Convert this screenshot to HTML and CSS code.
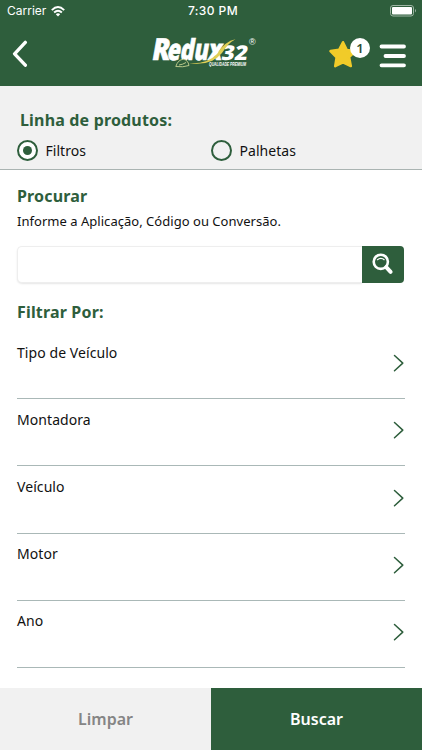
FILE: index.html
```html
<!DOCTYPE html>
<html lang="pt-BR">
<head>
<meta charset="utf-8">
<title>Redux32</title>
<link rel="stylesheet" href="styles.css">
</head>
<body>
<div class="app">
  <header class="header">
    <div class="status">
      <div class="carrier"><span>Carrier</span>
        <svg width="14" height="11" viewBox="0 0 14 11" fill="none" stroke="#fff" stroke-width="1.9"><path d="M.8 4.1Q7-1.9 13.2 4.1M3.1 6.5Q7 2.9 10.9 6.5"/><path d="M4.8 8.2Q7 6.4 9.2 8.2L7 10.5Z" fill="#fff" stroke="none"/></svg>
      </div>
      <span class="time">7:30 PM</span>
      <svg class="battery" width="27" height="12" viewBox="0 0 27 12"><rect x=".5" y=".5" width="23" height="10.5" rx="2.5" fill="none" stroke="#9db5a3"/><rect x="2" y="2" width="20" height="7.5" rx="1" fill="#fff"/><path d="M25 4Q27 5.7 25 7.5Z" fill="#9db5a3"/></svg>
    </div>
    <div class="navbar">
      <svg class="back" width="16" height="28" viewBox="0 0 16 28"><path d="M13.3 2.4 2.6 13.8 13.3 25.2" fill="none" stroke="#fff" stroke-width="3.4" stroke-linecap="round" stroke-linejoin="round"/></svg>
      <svg class="logo" width="106" height="38" viewBox="0 0 106 38">
        <g class="logo-text">
          <text class="word" x="0" y="25.3" font-size="30.5" textLength="17.5" lengthAdjust="spacingAndGlyphs" transform="translate(4.4 0) skewX(-10)">R</text>
          <text class="word" x="15.5" y="25.3" font-size="29" textLength="54.5" lengthAdjust="spacingAndGlyphs" transform="translate(4.4 0) skewX(-10)">edux</text>
          <text x="70" y="25.5" font-size="20.5" textLength="26" lengthAdjust="spacingAndGlyphs" transform="translate(4.2 0) skewX(-10)">32</text>
          <text class="tagline" x="58" y="31" font-size="5.2" textLength="37" lengthAdjust="spacingAndGlyphs">QUALIDADE PREMIUM</text>
          <text class="mark" x="98" y="10" font-size="9">®</text>
        </g>
        <path d="M38 28.2Q56 29.5 66 19 74 6 84.5 4.2 77 8 71 18 60 31.5 38 28.2Z" fill="#e0cf55"/>
        <path d="M24.8 31.5Q27 24.5 32.5 24.3 37 25 38 30.5 32 32.5 24.8 31.5ZM28 30Q32 29.5 35 27.5" fill="#2e5e3c" stroke="#b9c88a" stroke-width="1"/>
      </svg>
      <svg class="star" width="28" height="29" viewBox="0 0 28 29"><path d="M14 2.2 17.7 9.9 26.3 11.1 20.1 17.1 21.8 26.1 14 22.4 6.2 26.1 7.6 17.5 1.5 11.1 10.1 9.8Z" fill="#f1cb29" stroke="#f1cb29" stroke-width="2.5" stroke-linejoin="round"/></svg>
      <span class="badge">1</span>
      <svg class="menu" width="28" height="24" viewBox="0 0 28 24"><path d="M2.5 2.5H25M6.5 12H25M2.5 21.3H25" stroke="#fff" stroke-width="3.8" stroke-linecap="round"/></svg>
    </div>
  </header>

  <section class="products">
    <h2>Linha de produtos:</h2>
    <div class="radios">
      <div class="option"><span class="radio checked"></span><span>Filtros</span></div>
      <div class="option"><span class="radio"></span><span>Palhetas</span></div>
    </div>
  </section>

  <main class="content">
    <h2>Procurar</h2>
    <p>Informe a Aplicação, Código ou Conversão.</p>
    <div class="search">
      <input type="text" aria-label="Procurar">
      <button aria-label="Buscar"><svg width="22" height="22" viewBox="0 0 22 22" fill="none" stroke="#fff"><circle cx="8.8" cy="8.8" r="7.1" stroke-width="2.6"/><path d="M5.1 7Q9 3.7 12.5 7" stroke-width="1.2"/><path d="m14.2 14.2 4.4 4.6" stroke-width="4" stroke-linecap="round"/></svg></button>
    </div>
    <h2 class="filter-title">Filtrar Por:</h2>
    <div class="list">
      <div class="row"><span>Tipo de Veículo</span><svg width="12" height="18" viewBox="0 0 12 18"><path d="m1.5 1.5 8.3 7.6-8.3 7.6"/></svg></div>
      <div class="row"><span>Montadora</span><svg width="12" height="18" viewBox="0 0 12 18"><path d="m1.5 1.5 8.3 7.6-8.3 7.6"/></svg></div>
      <div class="row"><span>Veículo</span><svg width="12" height="18" viewBox="0 0 12 18"><path d="m1.5 1.5 8.3 7.6-8.3 7.6"/></svg></div>
      <div class="row"><span>Motor</span><svg width="12" height="18" viewBox="0 0 12 18"><path d="m1.5 1.5 8.3 7.6-8.3 7.6"/></svg></div>
      <div class="row"><span>Ano</span><svg width="12" height="18" viewBox="0 0 12 18"><path d="m1.5 1.5 8.3 7.6-8.3 7.6"/></svg></div>
    </div>
  </main>

  <footer class="actions">
    <button class="clear">Limpar</button>
    <button class="submit">Buscar</button>
  </footer>
</div>
</body>
</html>
```
FILE: styles.css
```css
* { box-sizing: border-box; }
body { margin: 0; font-family: "Noto Sans", sans-serif; color: #111; background: #fff; }
.app { width: 422px; height: 750px; display: flex; flex-direction: column; overflow: hidden; }
.header { height: 86px; flex: none; background: #2e5e3c; color: #fff; }
.status { height: 22px; display: grid; grid-template-columns: 1fr auto 1fr; align-items: center; padding: 0 5px 0 7px; font: 12px/22px Inter, sans-serif; }
.carrier { display: flex; align-items: center; gap: 5px; letter-spacing: 0; }
.time { font-weight: 500; font-size: 12px; letter-spacing: .4px; padding-left: 2px; }
.battery { justify-self: end; }
.navbar { height: 64px; display: flex; align-items: flex-start; padding-left: 12px; }
.back { margin-top: 18px; }
.logo { margin: 13px 0 0 123px; overflow: visible; }
.logo-text { fill: #fff; font-family: "Open Sans", sans-serif; font-weight: 800; }
.logo-text .word { stroke: #fff; stroke-width: .7; }
.logo-text .tagline { font-family: "Liberation Sans", sans-serif; font-style: italic; font-weight: 700; }
.logo-text .mark { font-family: "Liberation Sans", sans-serif; font-weight: 400; }
.star { margin: 18px 0 0 72px; }
.badge { position: relative; margin: 16px 0 0 -7px; width: 20px; height: 20px; border-radius: 50%; background: #fff; color: #2e4e36; font-size: 13px; font-weight: 600; line-height: 20px; text-align: center; }
.menu { margin: 22px 0 0 9px; }
h2 { margin: 0; font-size: 16px; line-height: 22px; font-weight: 700; letter-spacing: .17px; color: #2e5e3c; }
.products { height: 84px; flex: none; background: #f1f1f1; border-bottom: 1px solid #aab4b2; padding-top: 23px; }
.products h2 { padding-left: 20px; }
.radios { display: grid; grid-template-columns: 194px 1fr; padding: 8.5px 0 0 17px; }
.option { display: flex; align-items: center; gap: 7.5px; height: 22px; font-size: 14px; letter-spacing: .04px; }
.radio { width: 21px; height: 21px; border: 2px solid #2e5e3c; border-radius: 50%; display: grid; place-items: center; }
.radio.checked { background: #fff; }
.checked::after { content: ""; width: 9px; height: 9px; border-radius: 50%; background: #2e5e3c; }
.content { flex: 1; padding: 15px 17px 0; }
.content p { margin: 4px 0 0; font-size: 13px; line-height: 20px; letter-spacing: .03px; }
.search { height: 37px; width: 387px; margin-top: 14.5px; display: flex; border-radius: 4px; }
.search input { flex: 1; min-width: 0; border: 1px solid #eee; border-right: 0; border-radius: 5px 0 0 5px; box-shadow: 0 1px 2px #e6e6e6; outline: 0; }
.search button { width: 42px; border: 0; padding: 0; border-radius: 0 4px 4px 0; background: #2e5e3c; display: grid; place-items: center; }
.filter-title { margin-top: 18.5px; }
.list { margin-top: 9px; }
.row { height: 67.2px; border-bottom: 1px solid #aab8b7; display: flex; justify-content: space-between; padding-top: 10.6px; font-size: 14px; line-height: 20px; letter-spacing: .07px; }
.row svg { margin-top: 11.6px; fill: none; stroke: #2e5e3c; stroke-width: 1.5; stroke-linecap: round; stroke-linejoin: round; }
.actions { height: 62px; flex: none; display: grid; grid-template-columns: 1fr 1fr; }
.actions button { border: 0; padding: 0; font: 600 16px/22px "Noto Sans", sans-serif; }
.clear { background: #f1f1f1; color: #858585; }
.submit { background: #2e5e3c; color: #fff; }
```
